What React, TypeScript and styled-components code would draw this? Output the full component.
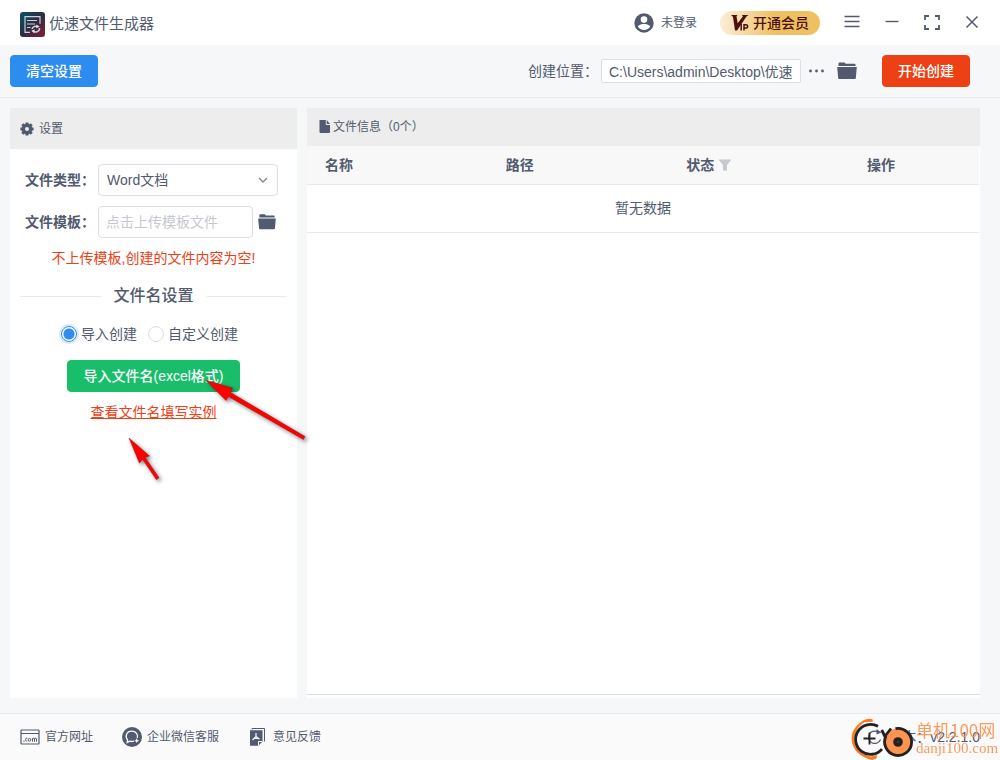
import React, { useState } from "react";
import styled, { createGlobalStyle, css } from "styled-components";

const ink = "#515a6e";
const line = "#e8eaec";
const field = "#dcdee2";
const danger = "#ed4014";

const GlobalStyle = createGlobalStyle`
  *, *::before, *::after { box-sizing: border-box; }
  body {
    margin: 0;
    background: #f5f7f9;
    color: ${ink};
    font-family: "Liberation Sans", "Noto Sans CJK SC", sans-serif;
    font-size: 14px;
    line-height: 20px;
  }
  button, input, select { font: inherit; color: inherit; margin: 0; }
  svg { display: block; flex: none; }
`;

const Page = styled.div`
  position: relative;
  display: flex;
  flex-direction: column;
  min-height: 100vh;
  overflow: hidden;
`;

const TitleBar = styled.header`
  display: flex;
  align-items: center;
  height: 45px;
  padding: 0 8px 0 20px;
  background: #fff;
`;

const AppName = styled.h1`
  flex: 1;
  display: flex;
  align-items: center;
  gap: 4px;
  margin: 0;
  padding-top: 3px;
  font-size: 15px;
  font-weight: 400;
`;

const PlainButton = styled.button`
  display: flex;
  align-items: center;
  justify-content: center;
  padding: 0;
  border: 0;
  background: none;
  cursor: pointer;
`;

const UserButton = styled(PlainButton)`
  gap: 7px;
  margin-right: 23px;
  font-size: 12px;
`;

const VipButton = styled(PlainButton)`
  gap: 3px;
  width: 100px;
  height: 24px;
  margin-right: 12px;
  border-radius: 12px;
  background: linear-gradient(90deg, #fbeed8, #f0c060 55%, #f0bf5f);
  color: #4d1010;
  font-weight: 500;
`;

const WindowButton = styled(PlainButton)`
  width: 40px;
  height: 40px;
`;

const Toolbar = styled.div`
  display: flex;
  align-items: center;
  height: 53px;
  padding: 0 30px 0 10px;
  border-bottom: 1px solid ${line};
`;

const Button = styled.button<{ $color: string }>`
  height: 32px;
  padding: 0 15px;
  border: 1px solid ${(p) => p.$color};
  border-radius: 4px;
  background: ${(p) => p.$color};
  color: #fff;
  font-weight: 500;
  white-space: nowrap;
  cursor: pointer;
`;

const SaveTo = styled.div`
  display: flex;
  align-items: center;
  margin-left: auto;
`;

const PathInput = styled.input`
  width: 200px;
  height: 24px;
  margin-left: 3px;
  padding: 0 7px;
  border: 1px solid ${field};
  border-radius: 2px;
  background: #fff;
`;

const MoreButton = styled(PlainButton)`
  width: 18px;
  height: 24px;
  margin: 0 11px 0 7px;
`;

const FolderButton = styled(PlainButton)`
  margin-right: 25px;
`;

const Main = styled.main`
  flex: 1;
  display: flex;
  gap: 10px;
  padding: 10px 20px 15px 10px;
`;

const SettingsPanel = styled.section`
  flex: none;
  width: 287px;
  background: #fff;
`;

const PanelTitle = styled.h2<{ $height: number; $gap: number; $inset: number }>`
  display: flex;
  align-items: center;
  gap: ${(p) => p.$gap}px;
  height: ${(p) => p.$height}px;
  margin: 0;
  padding-left: ${(p) => p.$inset}px;
  background: #ededed;
  font-size: 12px;
  font-weight: 400;
`;

const Form = styled.form`
  display: flex;
  flex-direction: column;
  padding: 15px 10px;
`;

const FormRow = styled.div`
  display: flex;
  align-items: center;
  height: 32px;
  margin: 0 9px 10px 5px;
`;

const FormLabel = styled.label`
  flex: none;
  width: 73px;
  font-weight: 700;
  white-space: nowrap;
`;

const fieldBox = css`
  height: 32px;
  border: 1px solid ${field};
  border-radius: 4px;
  background: #fff;
`;

const SelectWrap = styled.div`
  position: relative;
  flex: 1;
  svg {
    position: absolute;
    top: 12px;
    right: 10px;
    pointer-events: none;
  }
`;

const Select = styled.select`
  ${fieldBox}
  width: 100%;
  padding: 0 24px 0 8px;
  appearance: none;
`;

const TemplateInput = styled.input`
  ${fieldBox}
  flex: 1;
  min-width: 0;
  margin-right: 5px;
  padding: 0 7px;
  &::placeholder { color: #c5c8ce; }
`;

const TemplateFolder = styled(PlainButton)`
  width: 20px;
  justify-content: flex-start;
`;

const Warning = styled.p`
  margin: 0;
  color: ${danger};
  text-align: center;
`;

const Divider = styled.h3`
  display: flex;
  align-items: center;
  gap: 13px;
  margin: 16px 0;
  font-size: 16px;
  line-height: 24px;
  font-weight: 500;
  &::before, &::after {
    content: "";
    flex: 1;
    height: 1px;
    background: ${line};
  }
`;

const RadioGroup = styled.div`
  display: flex;
  justify-content: center;
  gap: 11px;
  padding-right: 8px;
  margin-bottom: 16px;
`;

const RadioLabel = styled.label`
  display: flex;
  align-items: center;
  gap: 4px;
`;

const Radio = styled.input`
  appearance: none;
  width: 16px;
  height: 16px;
  border: 1px solid ${field};
  border-radius: 50%;
  background: #fff;
  &:checked {
    border-color: #2d8cf0;
    background: radial-gradient(circle, #2d8cf0 5px, #fff 6px);
    box-shadow: 0 0 0 2px rgba(45, 140, 240, 0.2);
  }
`;

const ImportArea = styled.div`
  display: flex;
  flex-direction: column;
  align-items: center;
  gap: 10px;
`;

const ExampleLink = styled.a`
  color: ${danger};
  text-decoration: underline;
`;

const FilesPanel = styled.section`
  flex: 1;
  display: flex;
  flex-direction: column;
  min-width: 0;
  padding-bottom: 3px;
  background: #fff;
`;

const TableArea = styled.div`
  flex: 1;
  padding-right: 1px;
  border-bottom: 1px solid ${field};
`;

const Table = styled.table`
  width: 100%;
  table-layout: fixed;
  border-collapse: separate;
  border-spacing: 0;
`;

const HeadCell = styled.th`
  height: 39px;
  padding: 0 18px;
  border-bottom: 1px solid ${line};
  background: #f8f8f9;
  text-align: left;
  font-weight: 700;
`;

const HeadContent = styled.span`
  display: flex;
  align-items: center;
  gap: 4px;
`;

const LastCol = styled.col`
  width: 130px;
`;

const EmptyCell = styled.td`
  height: 48px;
  padding: 0 0 2px;
  border-bottom: 1px solid ${line};
  text-align: center;
`;

const Footer = styled.footer`
  display: flex;
  align-items: center;
  gap: 29px;
  height: 47px;
  padding: 0 20px;
  border-top: 1px solid ${line};
  background: #fafafa;
  font-size: 12px;
`;

const FooterLink = styled.a`
  display: flex;
  align-items: center;
  gap: 5px;
  color: inherit;
  text-decoration: none;
`;

const Version = styled.span`
  display: flex;
  align-items: center;
  gap: 5px;
  margin-left: auto;
  font-size: 14px;
`;

const Pointers = styled.svg`
  position: absolute;
  left: 120px;
  top: 370px;
  pointer-events: none;
  filter: drop-shadow(2px 2px 2px rgba(0, 0, 0, 0.5));
`;

const Watermark = styled.div`
  position: absolute;
  right: 2px;
  bottom: 0;
  display: flex;
  gap: 1px;
  pointer-events: none;
  color: #ff8f4d;
`;

const WatermarkText = styled.div`
  display: flex;
  flex-direction: column;
  width: 82px;
  padding-top: 2px;
  white-space: nowrap;
  opacity: 0.9;
`;

const WatermarkName = styled.span`
  font: 17px/20px "Noto Sans CJK SC", sans-serif;
`;

const WatermarkSite = styled.span`
  font: 15px/16px "Liberation Serif", serif;
`;

const AppLogo = () => (
  <svg width="25" height="25" viewBox="0 0 25 25" aria-hidden="true">
    <defs>
      <linearGradient id="logo" x1="0" y1="0" x2="1" y2="1">
        <stop offset="0" stopColor="#0b5364" />
        <stop offset=".5" stopColor="#2c2d42" />
        <stop offset="1" stopColor="#8b1a3a" />
      </linearGradient>
    </defs>
    <rect width="25" height="25" rx="3" fill="url(#logo)" />
    <g fill="none" stroke="#c9d0da" strokeWidth="1.200">
      <path d="M10 20.300H5V4.700h15v7" />
      <path d="M7 8.500h10M7 12h8M7 15.500h3.500" />
      <path d="M12 17a4 3.600 0 0 1 6-2.300M19.500 16a4 3.600 0 0 1-6.500 3.200" strokeWidth="1.500" />
    </g>
    <path d="M16.500 12.500l3.200 2.300-3.500 1.400zM14.800 17.500l-3.500 1.200 3 2.600z" fill="#dfe3ea" />
  </svg>
);

const UserIcon = () => (
  <svg width="20" height="20" viewBox="0 0 20 20" aria-hidden="true">
    <circle cx="10" cy="10" r="9.700" fill={ink} />
    <circle cx="10" cy="6.600" r="3.300" fill="#fff" />
    <path d="M3.800 13.200C5.200 11.300 8 10.900 10 10.900s4.800.4 6.200 2.300C15 15.700 12.600 17 10 17s-5-1.300-6.200-3.800z" fill="#fff" />
  </svg>
);

const VipIcon = () => (
  <svg width="19" height="18" viewBox="0 0 19 18" aria-hidden="true">
    <path d="M0 1h6.500l-1 1.200 1.200 7L11.800 2.500 11 1h6.500l-2 1.600L6 16.500H4L2 3z" fill="#4d1010" />
    <path d="M10.200 10v6.500M13 16.500V10.700h1.700q1.900 0 1.900 1.700t-1.900 1.700H13" fill="none" stroke="#4d1010" strokeWidth="1.500" />
  </svg>
);

const Folder = ({ size }: { size: number }) => (
  <svg width={size} height={size} viewBox="0 0 20 20" aria-hidden="true">
    <path d="M1.500 4V2.500q0-1 1-1h5l1.200 1.300h8.800q1 0 1 1V5h-17z" fill={ink} />
    <path d="M.2 6h19.600l-1 11.200q-.1.800-1 .8H2.200q-.9 0-1-.8z" fill={ink} />
  </svg>
);

const GearIcon = () => (
  <svg width="14" height="14" viewBox="0 0 14 14" aria-hidden="true">
    <circle cx="7" cy="7" r="3.700" fill="none" stroke={ink} strokeWidth="3.400" />
    <g stroke={ink} strokeWidth="3">
      <path d="M7 .4v2M7 11.600v2M.4 7h2M11.600 7h2M2.300 2.300l1.500 1.500M10.200 10.200l1.500 1.500M2.300 11.700l1.500-1.500M10.200 3.800l1.500-1.500" />
    </g>
  </svg>
);

const FileIcon = () => (
  <svg width="12" height="16" viewBox="0 0 12 16" aria-hidden="true">
    <path d="M.5 1h6.300v5h4.200v7q0 1-1 1H1.500q-1 0-1-1z" fill={ink} />
    <path d="M7.700 1L11 5H7.700z" fill={ink} />
  </svg>
);

const ComIcon = () => (
  <svg width="20" height="16" viewBox="0 0 20 16" aria-hidden="true">
    <g fill="none" stroke={ink}>
      <rect x="1" y="1" width="18" height="14" rx=".5" strokeWidth="1.200" />
      <path d="M1 4.500h18" />
      <path d="M7.300 9.300c-2.400-1-2.400 3.600 0 2.700M12.500 12.700V9.500M14.500 12.700v-2.700q0-.8-.9-.8t-1.100.8M16.500 12.700v-2.700q0-.8-.9-.8t-1.100.8" />
      <circle cx="9.500" cy="10.800" r="1.300" />
    </g>
    <circle cx="4" cy="12.300" r=".7" fill={ink} />
  </svg>
);

const ChatIcon = () => (
  <svg width="20" height="20" viewBox="0 0 20 20" aria-hidden="true">
    <circle cx="10" cy="10" r="10" fill={ink} />
    <path d="M12 14.100c-1.300.5-3 .5-4.300.1L5.200 15.500l.3-2.600C2.700 9.500 4.500 4.200 9.700 4.200c4.300 0 6.700 3.500 5.600 6.800" fill="none" stroke="#fff" strokeWidth="1.300" />
    <path d="M14.700 11.300l.8 1.600 1.600.8-1.600.8-.8 1.600-.8-1.600-1.600-.8 1.600-.8z" fill="#fff" />
  </svg>
);

const FeedbackIcon = () => (
  <svg width="20" height="20" viewBox="0 0 20 20" aria-hidden="true">
    <path d="M4 2.500v-1h12.500v13" fill="none" stroke={ink} />
    <path d="M2 3.200h12.500V14.500L10.500 18.700H2z" fill={ink} />
    <path d="M10.500 18.700v-4.200h4" fill="none" stroke="#fafafa" />
    <path d="M8 6v3.500L4.500 13M8 9.500l3.500 2.800M6 11.500h4" fill="none" stroke="#fafafa" strokeWidth="1.200" />
  </svg>
);

const RefreshIcon = () => (
  <svg width="16" height="16" viewBox="0 0 16 16" aria-hidden="true">
    <path d="M13.500 10.500A6.200 6.200 0 1 1 10.500 2.700" fill="none" stroke={ink} strokeWidth="1.200" />
    <path d="M9.500 0l5 3.500-5 2z" fill={ink} />
  </svg>
);

const WatermarkLogo = () => (
  <svg width="65" height="42" viewBox="0 0 65 42" aria-hidden="true">
    <path d="M22.700 1.500C21 .3 17.500.5 15 1.800 7 5.500 1.500 13 1.600 21c.2 10 8 18 20.400 21l4.500-1.500.5-3.500-6 1.500C11 36.500 4.500 29.500 4.300 21.500 4.200 13.500 9 7.500 14.500 4.200l8.200-.5z" fill="#ff7a1f" />
    <path d="M28 8.300A15 15 0 1 0 32 31.100" fill="none" stroke="#222" strokeWidth="2.800" />
    <path d="M19.500 14.500v12M13.500 20.500h12" fill="none" stroke="#222" strokeWidth="1.800" />
    <circle cx="48" cy="24" r="13.500" fill="#ff9350" />
    <path d="M45.500 10.700A13.500 13.500 0 1 1 36 18M31.700 12l3.500 7M41 10.500l-5.500 7" fill="none" stroke="#222" strokeWidth="2.800" />
    <circle cx="48" cy="24" r="4.800" fill="#222" />
    <circle cx="48" cy="24" r=".8" fill="#a04a20" />
  </svg>
);

export default function App() {
  const [mode, setMode] = useState("import");
  const [path, setPath] = useState("C:\\Users\\admin\\Desktop\\优速");

  return (
    <Page>
      <GlobalStyle />
      <TitleBar>
        <AppName>
          <AppLogo />
          优速文件生成器
        </AppName>
        <UserButton type="button">
          <UserIcon />
          未登录
        </UserButton>
        <VipButton type="button">
          <VipIcon />
          开通会员
        </VipButton>
        <WindowButton type="button" aria-label="菜单">
          <svg width="16" height="16" viewBox="0 0 16 16">
            <path d="M.5 1.500h15M.5 6.500h15M.5 11.500h15" stroke={ink} strokeWidth="1.400" />
          </svg>
        </WindowButton>
        <WindowButton type="button" aria-label="最小化">
          <svg width="16" height="16" viewBox="0 0 16 16">
            <path d="M1.500 6.500h13" stroke={ink} strokeWidth="1.400" />
          </svg>
        </WindowButton>
        <WindowButton type="button" aria-label="全屏">
          <svg width="16" height="16" viewBox="0 0 16 16">
            <path d="M5 1H1v4M11 1h4v4M1 10v4h4M15 10v4h-4" fill="none" stroke={ink} strokeWidth="1.800" />
          </svg>
        </WindowButton>
        <WindowButton type="button" aria-label="关闭">
          <svg width="16" height="16" viewBox="0 0 16 16">
            <path d="M2.500 1.500l11 11M13.500 1.500l-11 11" stroke={ink} strokeWidth="1.500" />
          </svg>
        </WindowButton>
      </TitleBar>

      <Toolbar>
        <Button type="button" $color="#2d8cf0">清空设置</Button>
        <SaveTo>
          <label htmlFor="path">创建位置：</label>
          <PathInput id="path" value={path} onChange={(e) => setPath(e.target.value)} />
          <MoreButton type="button" aria-label="更多">
            <svg width="18" height="4" viewBox="0 0 18 4" fill={ink}>
              <circle cx="2.500" cy="2" r="1.400" />
              <circle cx="8.500" cy="2" r="1.400" />
              <circle cx="14.500" cy="2" r="1.400" />
            </svg>
          </MoreButton>
          <FolderButton type="button" aria-label="打开文件夹">
            <Folder size={20} />
          </FolderButton>
          <Button type="button" $color={danger}>开始创建</Button>
        </SaveTo>
      </Toolbar>

      <Main>
        <SettingsPanel>
          <PanelTitle $height={41} $gap={5} $inset={10}>
            <GearIcon />
            设置
          </PanelTitle>
          <Form>
            <FormRow>
              <FormLabel htmlFor="type">文件类型：</FormLabel>
              <SelectWrap>
                <Select id="type">
                  <option>Word文档</option>
                </Select>
                <svg width="10" height="8" viewBox="0 0 10 8">
                  <path d="M1 2l4 4 4-4" fill="none" stroke="#808695" strokeWidth="1.300" />
                </svg>
              </SelectWrap>
            </FormRow>
            <FormRow>
              <FormLabel htmlFor="template">文件模板：</FormLabel>
              <TemplateInput id="template" placeholder="点击上传模板文件" readOnly />
              <TemplateFolder type="button" aria-label="选择模板">
                <Folder size={18} />
              </TemplateFolder>
            </FormRow>
            <Warning>不上传模板,创建的文件内容为空!</Warning>
            <Divider>文件名设置</Divider>
            <RadioGroup>
              <RadioLabel>
                <Radio type="radio" name="mode" checked={mode === "import"} onChange={() => setMode("import")} />
                导入创建
              </RadioLabel>
              <RadioLabel>
                <Radio type="radio" name="mode" checked={mode === "custom"} onChange={() => setMode("custom")} />
                自定义创建
              </RadioLabel>
            </RadioGroup>
            <ImportArea>
              <Button type="button" $color="#19be6b">导入文件名(excel格式)</Button>
              <ExampleLink href="#example">查看文件名填写实例</ExampleLink>
            </ImportArea>
          </Form>
        </SettingsPanel>

        <FilesPanel>
          <PanelTitle $height={38} $gap={2} $inset={12}>
            <FileIcon />
            文件信息（0个）
          </PanelTitle>
          <TableArea>
            <Table>
              <colgroup>
                <col />
                <col />
                <col />
                <LastCol />
              </colgroup>
              <thead>
                <tr>
                  <HeadCell>名称</HeadCell>
                  <HeadCell>路径</HeadCell>
                  <HeadCell>
                    <HeadContent>
                      状态
                      <svg width="14" height="12" viewBox="0 0 14 12" aria-hidden="true">
                        <path d="M.5.500h13L9 6v5.500H5V6z" fill="#c5c8ce" />
                      </svg>
                    </HeadContent>
                  </HeadCell>
                  <HeadCell>操作</HeadCell>
                </tr>
              </thead>
              <tbody>
                <tr>
                  <EmptyCell colSpan={4}>暂无数据</EmptyCell>
                </tr>
              </tbody>
            </Table>
          </TableArea>
        </FilesPanel>
      </Main>

      <Footer>
        <FooterLink href="#site">
          <ComIcon />
          官方网址
        </FooterLink>
        <FooterLink href="#service">
          <ChatIcon />
          企业微信客服
        </FooterLink>
        <FooterLink href="#feedback">
          <FeedbackIcon />
          意见反馈
        </FooterLink>
        <Version>
          <RefreshIcon />
          <span>版本：v2.2.1.0</span>
        </Version>
      </Footer>

      <Pointers width="200" height="125" viewBox="120 370 200 125" aria-hidden="true">
        <path d="M206 380.500l26.500 7.500-2 4.500 74.500 44-1.500 3-75-43-2.500 4z" fill="#f00" stroke="#a01010" strokeWidth=".5" />
        <path d="M129 438l20.500 18-4.500 1.200 14 20.500-2.500 2-14-20.500-3 4z" fill="#f00" stroke="#a01010" strokeWidth=".5" />
      </Pointers>

      <Watermark>
        <WatermarkLogo />
        <WatermarkText>
          <WatermarkName>单机100网</WatermarkName>
          <WatermarkSite>danji100.com</WatermarkSite>
        </WatermarkText>
      </Watermark>
    </Page>
  );
}
